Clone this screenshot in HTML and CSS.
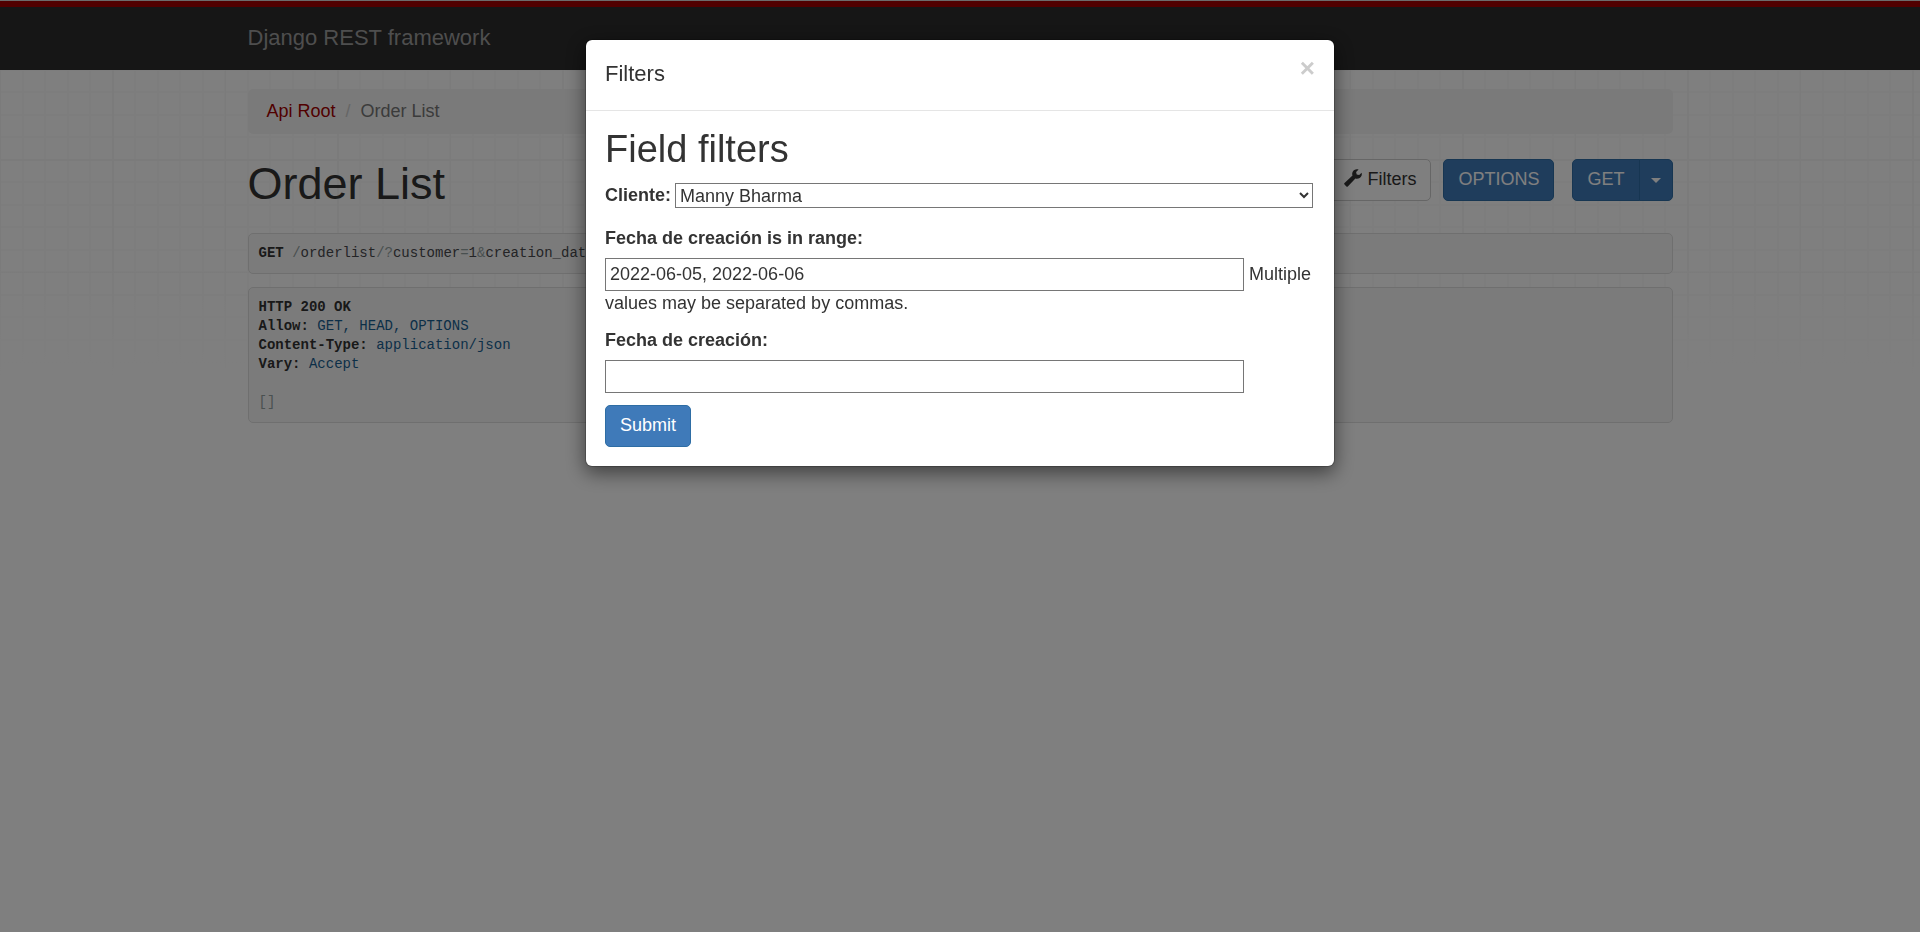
FILE: index.html
```html
<!DOCTYPE html>
<html lang="es">
<head>
<meta charset="utf-8">
<title>Order List – Django REST framework</title>
<link rel="stylesheet" href="styles.css">
</head>
<body>
<div class="page">
  <header class="navbar">
    <div class="container">
      <a class="navbar-brand" href="#">Django REST framework</a>
    </div>
  </header>

  <div class="container">
    <ul class="breadcrumb">
      <li><a href="#">Api Root</a></li>
      <li class="active">Order List</li>
    </ul>

    <main>
      <div class="page-header">
        <h1>Order List</h1>
        <div class="toolbar">
          <button type="button" class="btn btn-default">
            <svg class="icon" viewBox="0 0 18 18" aria-hidden="true"><path d="M14.6 0.6C12.4-0.3 9.6 0.6 8.6 3C8 4.4 8.1 5.6 8.5 6.6L0.5 14.1Q-0.2 14.8 0.5 15.5L2.4 17.4Q3.1 18.1 3.8 17.4L11.4 9.5C14 10.3 16.6 9 17.5 6.8C17.9 5.8 17.9 4.7 17.6 3.7L15.2 5.9L12.7 5.4L12.1 2.9Z"/></svg>
            Filters
          </button>
          <button type="button" class="btn btn-primary">OPTIONS</button>
          <div class="btn-group">
            <button type="button" class="btn btn-primary">GET</button>
            <button type="button" class="btn btn-primary btn-toggle" aria-label="Format"><span class="caret"></span></button>
          </div>
        </div>
      </div>

      <pre class="panel"><b>GET</b> <i>/</i>orderlist<i>/?</i>customer<i>=</i>1<i>&amp;</i>creation_date</pre>
      <pre class="panel response"><b>HTTP 200 OK</b>
<b>Allow:</b> <span class="lit">GET, HEAD, OPTIONS</span>
<b>Content-Type:</b> <span class="lit">application/json</span>
<b>Vary:</b> <span class="lit">Accept</span>

<i>[]</i></pre>
    </main>
  </div>
</div>

<div class="modal">
  <div class="modal-dialog" role="dialog" aria-labelledby="modal-title">
    <div class="modal-header">
      <h4 id="modal-title">Filters</h4>
      <button type="button" class="close" aria-label="Close">×</button>
    </div>
    <form class="modal-body">
      <h2>Field filters</h2>
      <p class="select-row">
        <label for="customer">Cliente:</label>
        <select id="customer"><option>Manny Bharma</option></select>
      </p>
      <p>
        <label for="range">Fecha de creación is in range:</label>
        <input type="text" id="range" value="2022-06-05, 2022-06-06">
        <span>Multiple values may be separated by commas.</span>
      </p>
      <p>
        <label for="created">Fecha de creación:</label>
        <input type="text" id="created">
      </p>
      <button type="submit" class="btn btn-primary">Submit</button>
    </form>
  </div>
</div>
</body>
</html>
```

FILE: styles.css
```css
* {
  box-sizing: border-box;
}

body {
  margin: 0;
  color: #333;
  background: #fff;
  font: 18px/25px "Liberation Sans", Arial, sans-serif;
}

.page {
  min-height: 100vh;
  border-top: 1px solid #d8d8d8;
  background:
    linear-gradient(to bottom, transparent 260px, #fff 390px),
    linear-gradient(to right, #f7f7f7 1px, transparent 1px, transparent 112px, #f7f7f7 112px, #f7f7f7 114px, transparent 114px) 0 0 / 225px 100%,
    linear-gradient(to bottom, #f7f7f7 1px, transparent 1px, transparent 112px, #f7f7f7 112px, #f7f7f7 114px, transparent 114px) 0 46px / 100% 225px,
    linear-gradient(to right, #fafafa 1px, transparent 1px, transparent 22px, #fafafa 22px, #fafafa 24px, transparent 24px, transparent 44px, #fafafa 44px) 0 0 / 45px 100%,
    linear-gradient(to bottom, #fafafa 1px, transparent 1px, transparent 22px, #fafafa 22px, #fafafa 24px, transparent 24px, transparent 44px, #fafafa 44px) 0 1px / 100% 45px;
}

.container {
  max-width: 1465px;
  margin: 0 auto;
  padding: 0 20px;
}

.navbar {
  border-top: 6px solid #a30000;
  background: #2c2c2c;
}

.navbar-brand {
  display: inline-block;
  padding: 18px 0 20px;
  color: #9d9d9d;
  font-size: 22px;
  text-decoration: none;
}

.breadcrumb {
  display: flex;
  margin: 19px 0 25px;
  padding: 10px 19px;
  border-radius: 5px;
  background: #f5f5f5;
  list-style: none;
}

.breadcrumb a {
  color: #a30000;
  text-decoration: none;
}

.breadcrumb .active {
  color: #777;
}

.breadcrumb .active::before {
  content: "/";
  padding: 0 10px;
  color: #ccc;
}

.page-header {
  display: flex;
  justify-content: space-between;
  align-items: flex-start;
  margin-bottom: 32px;
}

h1,
h2,
h4 {
  margin: 0;
  font-weight: 500;
}

h1 {
  font-size: 45px;
  line-height: 50px;
  margin-bottom: -8px;
}

.toolbar {
  display: flex;
}

.btn {
  padding: 6px 14px 8px;
  border: 1px solid #2e6da4;
  border-radius: 5px;
  font: inherit;
  line-height: 26px;
}

.toolbar .btn-default {
  margin-right: 12px;
}

.btn-default {
  border-color: #ccc;
  color: #333;
  background: #fff;
}

.btn-primary {
  color: #fff;
  background: #3f7ab9;
}

.icon {
  width: 18px;
  height: 18px;
  vertical-align: -2px;
  fill: currentColor;
}

.btn-group {
  display: flex;
  margin-left: 18px;
}

.btn-group .btn:first-child {
  border-radius: 5px 0 0 5px;
}

.btn-group .btn-toggle {
  margin-left: -1px;
  padding: 7px 11px;
  border-radius: 0 5px 5px 0;
}

.caret {
  display: block;
  border: 5px solid transparent;
  border-top-color: #fff;
  border-bottom: 0;
}

.panel {
  margin: 0 0 13px;
  padding: 10px;
  border: 1px solid #dfdfdf;
  border-radius: 5px;
  color: #48484c;
  background: #f7f7f7;
  font: 14px/19px "Liberation Mono", monospace;
}

.panel b {
  color: #333;
}

.panel i {
  color: #93a1a1;
  font-style: normal;
}

.panel .lit {
  color: #195f91;
}

.modal {
  position: fixed;
  inset: 0;
  padding: 39px 20px;
  background: rgba(0, 0, 0, 0.5);
}

.modal-dialog {
  max-width: 750px;
  margin: 0 auto;
  border: 1px solid rgba(0, 0, 0, 0.2);
  border-radius: 7px;
  background: #fff;
  background-clip: padding-box;
  box-shadow: 0 6px 19px rgba(0, 0, 0, 0.5);
}

.modal-header {
  display: flex;
  justify-content: space-between;
  align-items: flex-start;
  padding: 19px 19px 21px;
  border-bottom: 1px solid #e5e5e5;
}

h4 {
  font-size: 22px;
  line-height: 30px;
}

.close {
  padding: 0;
  border: 0;
  color: #ccc;
  background: none;
  font: bold 26px/18px "Liberation Sans", Arial, sans-serif;
}

.modal-body {
  padding: 19px;
}

h2 {
  margin-bottom: 15px;
  font-size: 38px;
  line-height: 38px;
}

.modal-body p {
  margin: 0 0 12px;
}

.modal-body label {
  display: inline-block;
  margin-bottom: 7px;
  font-weight: bold;
}

.modal-body input,
.modal-body select {
  width: 90%;
  border: 1px solid #767676;
  border-radius: 0;
  color: #333;
  background: #fff;
  font: inherit;
}

.modal-body input {
  height: 33px;
  padding: 1px 4px;
}

.modal-body .select-row {
  display: flex;
  gap: 4px;
  margin-bottom: 11px;
  padding-right: 2px;
}

.modal-body select {
  flex: 1;
  height: 25px;
}
```
